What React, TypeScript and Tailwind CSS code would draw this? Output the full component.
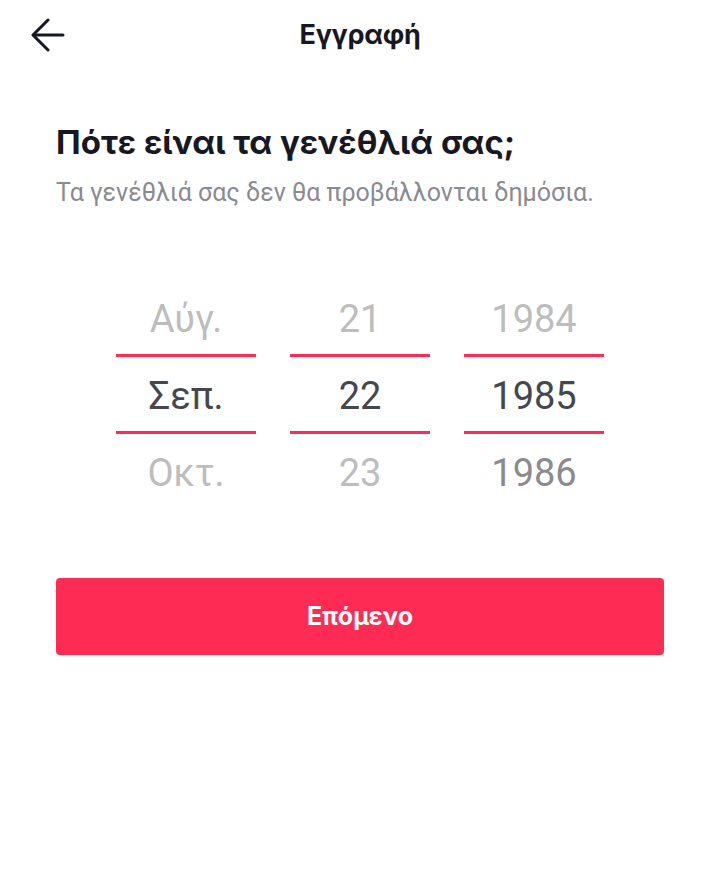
import React from "react";

const cols = [
  { top: "Αύγ.", mid: "Σεπ.", bot: "Οκτ.", botColor: "text-[#bdbdbd]" },
  { top: "21", mid: "22", bot: "23", botColor: "text-[#bdbdbd]" },
  { top: "1984", mid: "1985", bot: "1986", botColor: "text-[#8a8a8f]" },
];

export default function App() {
  return (
    <div className="w-[720px] h-[884px] bg-white font-['Roboto',sans-serif]">
      <header className="relative h-[70px] flex items-center justify-center">
        <button className="absolute left-[30px] top-[18px] w-[36px] h-[34px] flex items-center justify-center">
          <svg width="34" height="34" viewBox="0 0 34 34" fill="none" stroke="#161823" strokeWidth="3" strokeLinecap="round" strokeLinejoin="round">
            <path d="M32 17H3" />
            <path d="M17 2L2 17L17 32" />
          </svg>
        </button>
        <h1 className="font-['Inter',sans-serif] text-[27px] font-bold text-[#161823] tracking-[-0.3px]">Εγγραφή</h1>
      </header>
      <div className="px-[56px] pt-[52px]">
        <h2 className="font-['Inter',sans-serif] text-[33px] font-bold leading-[40px] text-[#161823]">Πότε είναι τα γενέθλιά σας;</h2>
        <p className="mt-[17px] text-[25px] leading-[28px] text-[#8a8b91]">Τα γενέθλιά σας δεν θα προβάλλονται δημόσια.</p>
        <div className="mt-[73px] flex justify-center gap-[34px]">
          {cols.map((c, i) => (
            <div key={i} className="w-[140px] flex flex-col items-center text-[38px] leading-[78px]">
              <div className="h-[74px] text-[#bdbdbd]">{c.top}</div>
              <div className="w-full h-[3px] bg-[#fe2c55]" />
              <div className="h-[74px] text-[#45474f]">{c.mid}</div>
              <div className="w-full h-[3px] bg-[#fe2c55]" />
              <div className={`h-[74px] ${c.botColor}`}>{c.bot}</div>
            </div>
          ))}
        </div>
        <button className="mt-[70px] w-full h-[77px] rounded-[4px] bg-[#fe2c55] text-white font-['Inter',sans-serif] text-[25px] font-bold">
          Επόμενο
        </button>
      </div>
    </div>
  );
}
